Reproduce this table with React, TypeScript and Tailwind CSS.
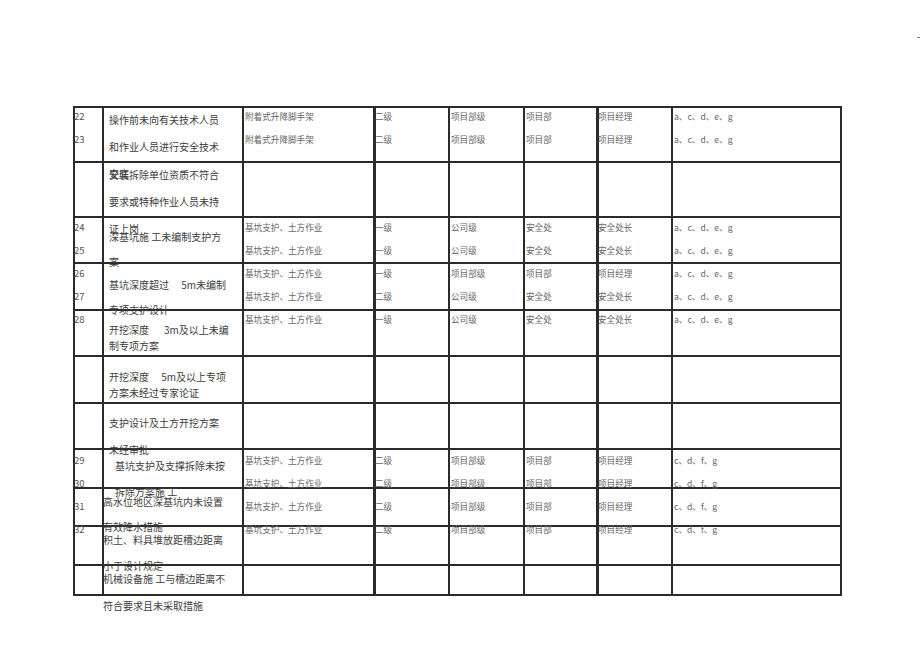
import React from 'react'

type Row = {
  h: string
  textCls: string
  itemCls: string
  lines: string[]
  entries: string[][]
}

const ACDEG = 'a、c、d、e、g'
const CDFG = 'c、d、f、g'
const JK = '基坑支护、土方作业'
const FJ = '附着式升降脚手架'

const xm = (n: string, w: string, last: string): string[] => [n, w, '二级', '项目部级', '项目部', '项目经理', last]
const gs = (n: string, lv: string): string[] => [n, JK, lv, '公司级', '安全处', '安全处长', ACDEG]

const rows: Row[] = [
  {
    h: 'h-[55px]',
    textCls: '-mt-[2px] leading-[27px] pl-[5px]',
    itemCls: '-mt-[3px]',
    lines: ['操作前未向有关技术人员', '和作业人员进行安全技术', '交底'],
    entries: [xm('22', FJ, ACDEG), xm('23', FJ, ACDEG)],
  },
  {
    h: 'h-[55px]',
    textCls: '-mt-[2px] leading-[27px] pl-[5px]',
    itemCls: '',
    lines: ['安装拆除单位资质不符合', '要求或特种作业人员未持', '证上岗'],
    entries: [],
  },
  {
    h: 'h-[46px]',
    textCls: 'mt-[6px] leading-[25px] pl-[5px]',
    itemCls: '-mt-[2px]',
    lines: ['深基坑施 工未编制支护方', '案'],
    entries: [gs('24', '一级'), gs('25', '一级')],
  },
  {
    h: 'h-[47px]',
    textCls: 'mt-[8px] leading-[25px] pl-[5px]',
    itemCls: '-mt-[2px]',
    lines: ['基坑深度超过\u2002\u2002 5m未编制', '专项支护设计'],
    entries: [
      ['26', JK, '一级', '项目部级', '项目部', '项目经理', ACDEG],
      gs('27', '二级'),
    ],
  },
  {
    h: 'h-[46px]',
    textCls: 'mt-[11px] leading-[16px] pl-[5px]',
    itemCls: '-mt-[3px]',
    lines: ['开挖深度\u2002\u2002\u20023m及以上未编', '制专项方案'],
    entries: [gs('28', '一级')],
  },
  {
    h: 'h-[47px]',
    textCls: 'mt-[12px] leading-[16px] pl-[5px]',
    itemCls: '',
    lines: ['开挖深度\u2002\u2002 5m及以上专项', '方案未经过专家论证'],
    entries: [],
  },
  {
    h: 'h-[46px]',
    textCls: 'mt-[5px] leading-[27px] pl-[5px]',
    itemCls: '',
    lines: ['支护设计及土方开挖方案', '未经审批'],
    entries: [],
  },
  {
    h: 'h-[39px]',
    textCls: 'mt-[3px] leading-[26px] pl-[11px]',
    itemCls: '-mt-[1px]',
    lines: ['基坑支护及支撑拆除未按', '拆除方案施 工'],
    entries: [xm('29', JK, CDFG), xm('30', JK, CDFG)],
  },
  {
    h: 'h-[38px]',
    textCls: 'mt-0 leading-[25px] -ml-[1px]',
    itemCls: 'mt-[6px]',
    lines: ['高水位地区深基坑内未设置', '有效降水措施'],
    entries: [xm('31', JK, CDFG)],
  },
  {
    h: 'h-[39px]',
    textCls: 'mt-0 leading-[26px] -ml-[1px]',
    itemCls: '-mt-[9px]',
    lines: ['积土、料具堆放距槽边距离', '小于设计规定'],
    entries: [xm('32', JK, CDFG)],
  },
  {
    h: 'h-[30px]',
    textCls: '-mt-[1px] leading-[27px] -ml-[1px]',
    itemCls: '',
    lines: ['机械设备施 工与槽边距离不', '符合要求且未采取措施'],
    entries: [],
  },
]

const widths = ['w-[29px]', 'w-[140px]', 'w-[132px]', 'w-[74px]', 'w-[75px]', 'w-[74px]', 'w-[74px]', 'w-[169px]']
const borders = [
  'border-r-2',
  'border-r-2',
  'border-r-[3px]',
  'border-r-2',
  'border-r-2',
  'border-r-[3px]',
  'border-r-2',
  'border-r-2',
]
const shifts = ['-ml-[1px]', '', 'pl-[1px]', '-ml-[1px]', 'pl-[1px]', 'pl-[1px]', '-ml-[1px]', 'pl-[1px]']

function ItemCell({ values, cls }: { values: string[]; cls: string }) {
  return (
    <div className={`flex flex-col ${cls}`}>
      {values.map((v, i) => (
        <span key={i} className="whitespace-pre leading-[23px]">
          {v}
        </span>
      ))}
    </div>
  )
}

export default function App() {
  return (
    <div
      className="relative h-[650px] w-[920px] overflow-hidden bg-white"
      style={{ fontFamily: '"Noto Sans CJK SC", "Liberation Sans", sans-serif' }}
    >
      <div className="flex h-[106px] justify-end">
        <div className="mt-[37px] h-px w-[3px] bg-[#777]" />
      </div>

      <div className="ml-[73px] w-[769px] border-l-2 border-t-2 border-[#2b2b2b]">
        {rows.map((r, ri) => (
          <div key={ri} className={`flex ${r.h} border-b-2 border-[#2b2b2b]`}>
            {widths.map((w, ci) => (
              <div key={ci} className={`${w} shrink-0 ${borders[ci]} border-[#2b2b2b]`}>
                {ci === 1 ? (
                  <div className={`flex flex-col text-[10px] text-[#3d3d3d] ${r.textCls}`}>
                    {r.lines.map((l, li) => (
                      <span key={li} className="whitespace-pre">
                        {l}
                      </span>
                    ))}
                  </div>
                ) : (
                  <ItemCell
                    cls={`${r.itemCls} ${shifts[ci]} ${ci === 0 ? 'text-[9.5px] text-[#555]' : 'text-[8.6px] text-[#666]'}`}
                    values={r.entries.map((e) => e[ci === 0 ? 0 : ci - 1])}
                  />
                )}
              </div>
            ))}
          </div>
        ))}
      </div>
    </div>
  )
}
